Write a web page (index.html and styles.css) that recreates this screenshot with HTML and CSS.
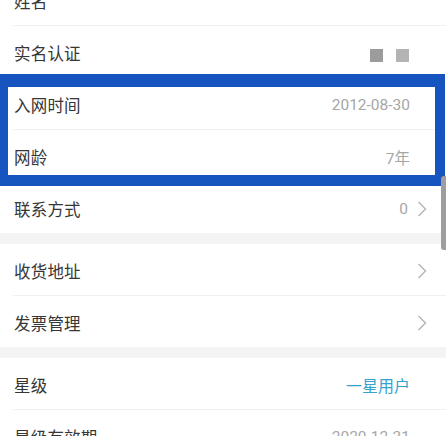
FILE: index.html
```html
<!DOCTYPE html>
<html lang="zh-CN">
<head>
<meta charset="utf-8">
<title>个人信息</title>
<link rel="stylesheet" href="styles.css">
</head>
<body>
<div class="screen">
  <div class="list">
    <section class="group">
      <div class="row"><span class="label">姓名</span></div>
      <div class="row">
        <span class="label">实名认证</span>
        <span class="dots"><i class="dot dark"></i><i class="dot light"></i></span>
      </div>
      <div class="row"><span class="label">入网时间</span><span class="value">2012-08-30</span></div>
      <div class="row"><span class="label">网龄</span><span class="value">7年</span></div>
      <div class="row link">
        <span class="label">联系方式</span>
        <span class="value">0</span>
        <svg class="chev" viewBox="0 0 10 16" width="10" height="16"><path d="M1.5 1 L8.5 8 L1.5 15" fill="none" stroke="#b4b4b4" stroke-width="1.4"/></svg>
      </div>
    </section>

    <section class="group">
      <div class="row link">
        <span class="label">收货地址</span>
        <svg class="chev" viewBox="0 0 10 16" width="10" height="16"><path d="M1.5 1 L8.5 8 L1.5 15" fill="none" stroke="#b4b4b4" stroke-width="1.4"/></svg>
      </div>
      <div class="row link">
        <span class="label">发票管理</span>
        <svg class="chev" viewBox="0 0 10 16" width="10" height="16"><path d="M1.5 1 L8.5 8 L1.5 15" fill="none" stroke="#b4b4b4" stroke-width="1.4"/></svg>
      </div>
    </section>

    <section class="group">
      <div class="row"><span class="label">星级</span><span class="value accent">一星用户</span></div>
      <div class="row"><span class="label">星级有效期</span><span class="value">2020-12-31</span></div>
    </section>
  </div>

  <!-- highlight frame around the network-age rows -->
  <div class="frame"></div>
  <div class="scrollbar"></div>
</div>
</body>
</html>
```

FILE: styles.css
```css
html, body {
  margin: 0;
  padding: 0;
  background: #ffffff;
}

.screen {
  position: relative;
  width: 446px;
  height: 436px;
  overflow: hidden;
  background: #f4f4f4;
  font-family: Roboto, "Noto Sans CJK SC", sans-serif;
}

.list {
  display: flex;
  flex-direction: column;
  gap: 11px;
  margin-top: -26px;
}

.group {
  display: flex;
  flex-direction: column;
  background: #ffffff;
}

/* rows are inset so the dividers start at the text edge */
.row {
  display: flex;
  align-items: center;
  height: 51px;
  box-sizing: border-box;
  margin-left: 13px;
  padding: 3px 36px 0 1px;
}

.row + .row {
  border-top: 1px solid #f0f0f0;
  height: 52px;
}

.row.link {
  padding-right: 19px;
}

.label {
  flex: 1;
  font-size: 16.5px;
  color: #363636;
  letter-spacing: 0.2px;
}

.value {
  font-size: 15.5px;
  color: #a6a6a6;
}

.value.accent {
  color: #35a2d2;
  font-size: 16px;
}

.chev {
  margin-left: 9px;
  display: block;
}

.dots {
  display: flex;
  gap: 13px;
  margin-right: 1px;
  margin-top: 4px;
}

.dot {
  display: block;
  width: 13px;
  height: 13px;
}

.dot.dark { background: #9c9c9c; }
.dot.light { background: #b4b4b4; }

.frame {
  position: absolute;
  left: 0;
  top: 74px;
  width: 445px;
  height: 112px;
  box-sizing: border-box;
  border-style: solid;
  border-color: #1654bf;
  border-width: 13px 10px 11px 8px;
}

.scrollbar {
  position: absolute;
  right: 0;
  top: 176px;
  width: 5px;
  height: 74px;
  background: #9e9e9e;
  border-radius: 3px 0 0 3px;
}
```
